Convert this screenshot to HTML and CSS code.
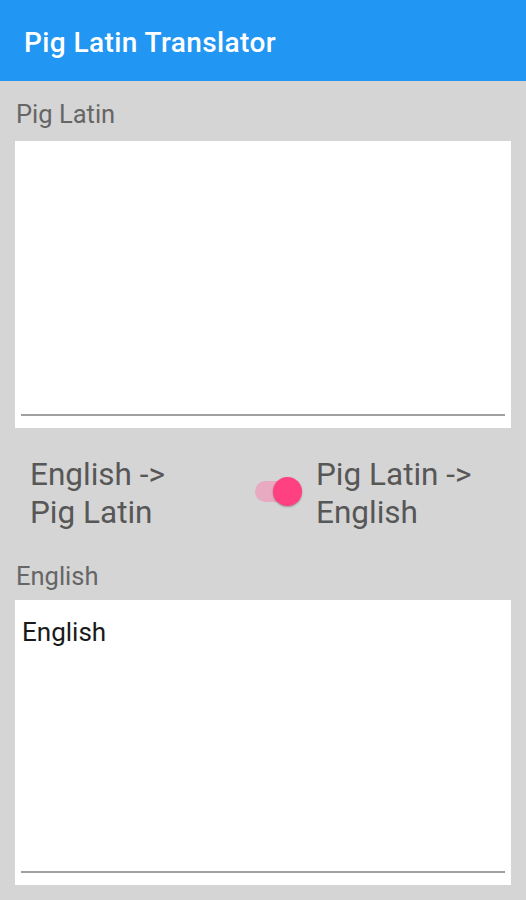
FILE: index.html
```html
<!DOCTYPE html>
<html>
<head>
<meta charset="utf-8">
<link rel="stylesheet" href="styles.css">
</head>
<body>
<header class="appbar"><h1 class="title">Pig Latin Translator</h1></header>
<main class="content">
  <div class="label label-top">Pig Latin</div>
  <div class="field field-top"><div class="field-text"></div><div class="underline"></div></div>
  <div class="toggle-row">
    <div class="opt opt-left">English -&gt;<br>Pig Latin</div>
    <div class="switch"><div class="track"></div><div class="thumb"></div></div>
    <div class="opt opt-right">Pig Latin -&gt;<br>English</div>
  </div>
  <div class="label">English</div>
  <div class="field field-bottom"><div class="field-text">English</div><div class="underline"></div></div>
</main>
</body>
</html>
```
FILE: styles.css
```css
html, body { margin: 0; padding: 0; }
body {
  width: 526px;
  height: 900px;
  background: #d5d5d5;
  font-family: Roboto, "Noto Sans", sans-serif;
  overflow: hidden;
}
.appbar {
  height: 81px;
  background: #2196f3;
  display: flex;
  align-items: center;
  padding-left: 24px;
  box-sizing: border-box;
}
.title {
  margin: 0;
  padding-top: 4px;
  color: #fff;
  font-size: 28px;
  font-weight: 500;
  letter-spacing: 0.4px;
}
.content { padding: 0 15px; }
.label {
  color: #666;
  font-size: 25.5px;
  line-height: 28px;
  padding-left: 1px;
}
.label-top { padding-top: 19px; }
.field {
  margin-top: 13px;
  background: #fff;
  display: flex;
  flex-direction: column;
  padding: 0 6px 12px;
  box-sizing: border-box;
}
.field-top { height: 287px; }
.field-bottom { margin-top: 10px; height: 285px; }
.field-text {
  flex: 1;
  font-size: 26px;
  color: #1a1a1a;
  padding-top: 17px;
  padding-left: 1px;
}
.underline { height: 2px; background: #a0a0a0; }
.toggle-row {
  display: flex;
  align-items: flex-start;
  padding: 28px 0 0 15px;
  height: 134px;
  box-sizing: border-box;
}
.opt {
  color: #575757;
  font-size: 31.5px;
  line-height: 37.5px;
}
.opt-left { width: 223px; }
.opt-right { margin-left: 14px; }
.switch {
  position: relative;
  width: 49px;
  height: 30px;
  margin-top: 21px;
}
.track {
  position: absolute;
  left: 2px; top: 4px;
  width: 43px; height: 21px;
  border-radius: 11px;
  background: #e7aac0;
}
.thumb {
  position: absolute;
  right: 0; top: 0;
  width: 29px; height: 29px;
  border-radius: 50%;
  background: #ff4081;
  box-shadow: 0 1px 2px rgba(0,0,0,0.3);
}
```
